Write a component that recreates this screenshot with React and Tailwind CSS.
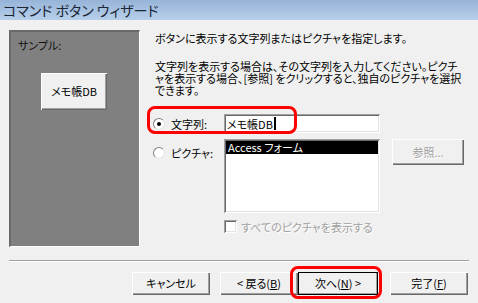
const jp = { fontFamily: '"Noto Sans CJK JP", "Noto Sans", sans-serif', fontFeatureSettings: '"palt"' };

const raised =
  "bg-[#f0f0f0] shadow-[inset_1px_1px_0_#ffffff,inset_-1px_-1px_0_#696969,inset_-2px_-2px_0_#a0a0a0]";
const sunken =
  "bg-white shadow-[inset_1px_1px_0_#a0a0a0,inset_-1px_-1px_0_#ffffff,inset_2px_2px_0_#696969,inset_-2px_-2px_0_#e3e3e3]";

function Radio({ checked }) {
  return (
    <div className="w-[12px] h-[12px] shrink-0 rounded-full bg-white border border-t-[#808080] border-l-[#808080] border-b-[#e3e3e3] border-r-[#e3e3e3] flex items-center justify-center">
      {checked && <div className="w-[4px] h-[4px] rounded-full bg-black" />}
    </div>
  );
}

function Btn({ w, children, def }) {
  return (
    <button
      className={`${raised} shrink-0 h-[23px] text-[11px] text-black flex items-center justify-center ${def ? "outline outline-1 outline-black -outline-offset-1" : ""}`}
      style={{ ...jp, width: w }}
    >
      {children}
    </button>
  );
}

export default function App() {
  return (
    <div className="relative w-[478px] h-[303px] bg-[#f0f0f0] flex flex-col overflow-hidden text-black" style={jp}>
      {/* title bar */}
      <div className="h-[20px] bg-gradient-to-b from-[#97b4d8] to-[#b6cfea] flex items-center pl-[3px]">
        <span className="text-[14px] leading-[20px] text-[#1b2636]" style={{ fontFamily: jp.fontFamily }}>
          コマンド ボタン ウィザード
        </span>
      </div>

      {/* content */}
      <div className="flex mt-[10px] pl-[9px]">
        {/* sample panel */}
        <div className="w-[131px] h-[217px] shrink-0 bg-[#808080] border-t-2 border-l-2 border-r border-b border-t-[#696969] border-l-[#696969] border-r-white border-b-white flex flex-col">
          <div className="ml-[7px] mt-[6px] text-[11px] leading-[14px] text-[#111]">サンプル:</div>
          <div className={`${raised} ml-[30px] mt-[21px] w-[66px] h-[37px] flex items-center justify-center text-[11px]`}>
            メモ帳DB
          </div>
        </div>

        {/* right column */}
        <div className="ml-[13px] flex flex-col text-[11px] min-w-0">
          <div className="ml-[2px] mt-[2px] leading-[12px] whitespace-nowrap">
            ボタンに表示する文字列またはピクチャを指定します。
          </div>
          <div className="ml-[2px] mt-[16px] leading-[12px] whitespace-nowrap">
            <div>文字列を表示する場合は、その文字列を入力してください。ピクチ</div>
            <div>ャを表示する場合、[参照] をクリックすると、独自のピクチャを選択</div>
            <div>できます。</div>
          </div>

          {/* text row */}
          <div className="flex items-center mt-[18px] h-[19px]">
            <Radio checked />
            <span className="ml-[6px] w-[53px] leading-[12px]">文字列:</span>
            <div className={`${sunken} w-[156px] h-[19px] flex items-center pl-[3px] leading-[12px]`}>
              メモ帳DB<span className="w-[2px] h-[13px] bg-black ml-[1px]" />
            </div>
          </div>

          {/* picture row */}
          <div className="flex items-start mt-[6px]">
            <div className="flex items-center mt-[8px]">
              <Radio />
              <span className="ml-[6px] w-[53px] leading-[12px]">ピクチャ:</span>
            </div>
            <div className={`${sunken} w-[156px] h-[74px] p-[2px]`}>
              <div className="bg-black text-white h-[13px] leading-[13px] pl-[2px]">Access フォーム</div>
            </div>
            <div className={`${raised} ml-[12px] w-[72px] h-[26px] flex items-center justify-center text-[#a0a0a0] [text-shadow:1px_1px_0_#fff]`}>
              参照...
            </div>
          </div>

          {/* checkbox */}
          <div className="flex items-center mt-[7px] ml-[71px]">
            <div className={`${sunken} w-[13px] h-[13px]`} />
            <span className="ml-[4px] leading-[12px] text-[#a0a0a0] [text-shadow:1px_1px_0_#fff]">
              すべてのピクチャを表示する
            </span>
          </div>
        </div>
      </div>

      {/* separator */}
      <div className="mx-[9px] mt-[13px] h-[2px] border-t border-t-[#a0a0a0] border-b border-b-white" />

      {/* buttons */}
      <div className="flex justify-end pr-[10px] mt-[10px]">
        <Btn w={78}>キャンセル</Btn>
        <div className="ml-[10px]" />
        <Btn w={78}>
          &lt; 戻る(<span className="underline">B</span>)
        </Btn>
        <Btn w={80} def>
          次へ(<span className="underline">N</span>) &gt;
        </Btn>
        <div className="ml-[12px]" />
        <Btn w={78}>
          完了(<span className="underline">F</span>)
        </Btn>
      </div>

      {/* red highlight annotations */}
      <div className="absolute left-[147px] top-[106px] w-[150px] h-[28px] border-[3px] border-[#ff0000] rounded-[8px]" />
      <div className="absolute left-[290px] top-[266px] w-[92px] h-[33px] border-[3px] border-[#ff0000] rounded-[8px]" />
    </div>
  );
}
